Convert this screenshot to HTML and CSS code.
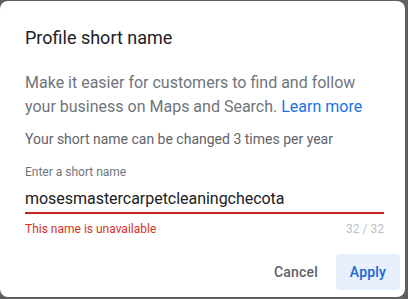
FILE: index.html
```html
<!DOCTYPE html>
<html lang="en">
<head>
  <meta charset="UTF-8">
  <title>Profile short name</title>
  <link rel="stylesheet" href="styles.css">
</head>
<body>
  <div class="dialog">
    <div class="dialog-body">
      <div class="title">Profile short name</div>
      <p class="intro">Make it easier for customers to find and follow your business on Maps and Search. <a href="javascript:;">Learn more</a></p>
      <p class="note">Your short name can be changed 3 times per year</p>
      <div class="field">
        <div class="label">Enter a short name</div>
        <div class="input">mosesmastercarpetcleaningchecota</div>
        <div class="hint">
          <span class="error">This name is unavailable</span>
          <span class="count">32 / 32</span>
        </div>
      </div>
    </div>
    <div class="actions">
      <button class="btn cancel">Cancel</button>
      <button class="btn apply">Apply</button>
    </div>
  </div>
</body>
</html>
```

FILE: styles.css
```css
* {
  margin: 0;
  padding: 0;
  box-sizing: border-box;
}
html,
body {
  width: 100%;
  height: 100%;
}
body {
  background: #5f5f5f;
  font-family: Roboto, 'Liberation Sans', sans-serif;
  overflow: hidden;
}
.dialog {
  margin-top: 1px;
  width: 405px;
  height: 296px;
  background: #ffffff;
  border-radius: 8px;
  display: flex;
  flex-direction: column;
}
.dialog-body {
  padding: 25px 21px 0 25px;
}
.title {
  font-size: 18px;
  line-height: 24px;
  color: #202124;
}
.intro {
  margin-top: 21px;
  font-size: 16px;
  line-height: 24px;
  color: #70757a;
}
a {
  text-decoration: none;
  color: #1a73e8;
}
.note {
  margin-top: 10px;
  font-size: 14px;
  line-height: 20px;
  color: #5f6368;
}
.field {
  margin-top: 15px;
}
.label {
  font-size: 12px;
  line-height: 16px;
  color: #70757a;
}
.input {
  margin-top: 7px;
  padding-bottom: 1px;
  font-size: 16px;
  line-height: 24px;
  letter-spacing: -0.03px;
  color: #202124;
  border-bottom: 2px solid #c5221f;
}
.hint {
  margin-top: 7px;
  display: flex;
  justify-content: space-between;
  font-size: 12px;
  line-height: 16px;
}
.error {
  color: #d93025;
}
.count {
  color: #bdc1c6;
}
.actions {
  margin-top: auto;
  padding: 0 5px 7px 0;
  display: flex;
  justify-content: flex-end;
  gap: 6px;
}
.btn {
  height: 36px;
  min-width: 64px;
  padding: 0 12px;
  border: none;
  border-radius: 4px;
  background: none;
  font-family: Roboto, 'Liberation Sans', sans-serif;
  font-size: 14px;
  font-weight: 500;
  letter-spacing: 0.2px;
}
.cancel {
  color: #5f6368;
}
.apply {
  background: #e8f0fe;
  color: #1967d2;
}
```
